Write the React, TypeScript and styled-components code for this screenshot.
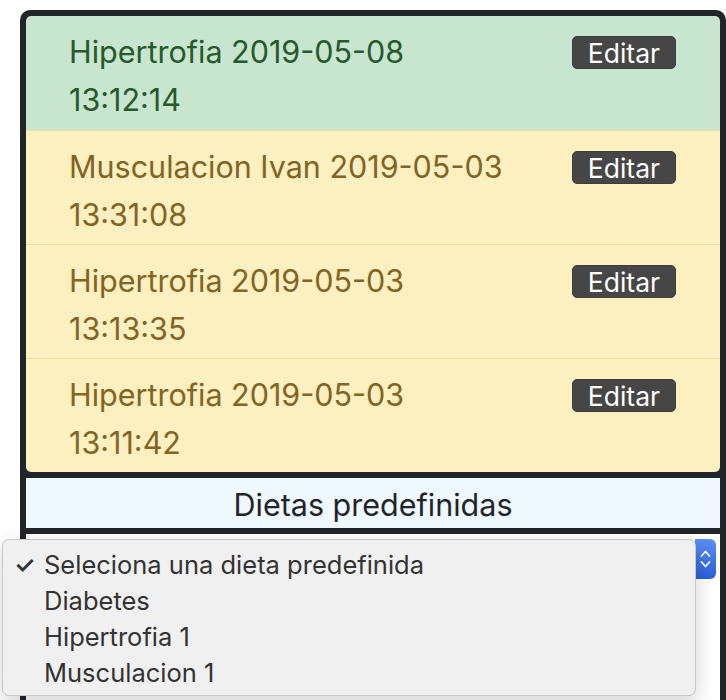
import React from "react";
import styled, { createGlobalStyle } from "styled-components";

const Global = createGlobalStyle`
  html, body { margin: 0; padding: 0; background: #ffffff; overflow: hidden; }
  body { font-family: Inter, "Noto Sans", sans-serif; }
  * { box-sizing: border-box; }
`;

const Page = styled.div`
  position: relative;
  height: 700px;
  padding: 10px 0 0 20px;
  overflow: hidden;
`;

const Frame = styled.div`
  width: 706px;
  height: 700px;
  border: 6px solid #212529;
  border-bottom: none;
  border-radius: 10px 10px 0 0;
  background: #212529;
  display: flex;
  flex-direction: column;
  gap: 6px;
`;

const ListGroup = styled.div`
  display: flex;
  flex-direction: column;
  border-radius: 5px;
  overflow: hidden;
`;

const Item = styled.div<{ $variant: "success" | "warning" }>`
  display: flex;
  align-items: flex-start;
  justify-content: space-between;
  height: 114px;
  padding: 12px 44px 0 43px;
  background: ${(p) => (p.$variant === "success" ? "#c8e5cf" : "#fcefc0")};
  color: ${(p) => (p.$variant === "success" ? "#265a2a" : "#826424")};
  border-top: 1px solid ${(p) => (p.$variant === "success" ? "#c8e5cf" : "#efdca7")};
  &:first-child { border-top: none; }
`;

const Title = styled.div`
  flex: none;
  width: 446px;
  font-size: 30.5px;
  line-height: 48px;
`;

const EditButton = styled.button`
  margin-top: 8px;
  height: 33px;
  padding: 0 15px;
  border: 1px solid #3d3d3d;
  border-radius: 5px;
  background: #464646;
  color: #ffffff;
  font-family: Inter, "Noto Sans", sans-serif;
  font-size: 26.5px;
  line-height: 30px;
`;

const Header = styled.div`
  height: 50px;
  padding-top: 3px;
  background: #f0f8ff;
  color: #212529;
  font-size: 30.5px;
  line-height: 47px;
  text-align: center;
`;

const SelectArea = styled.div`
  flex: 1;
  background: #ffffff;
  padding: 5px 4px 0 0;
`;

const SelectBox = styled.div`
  height: 40px;
  display: flex;
  justify-content: flex-end;
  background: #ffffff;
  border-radius: 6px;
`;

const Stepper = styled.div`
  width: 21px;
  height: 40px;
  border-radius: 0 6px 6px 0;
  background: linear-gradient(#5b8ff5, #2b5fd9);
  display: flex;
  align-items: center;
  justify-content: center;
`;

const Popup = styled.div`
  position: absolute;
  left: 2px;
  top: 539px;
  width: 694px;
  height: 157px;
  background: #f0f0f0;
  border: 1px solid #c8c8c8;
  border-radius: 7px;
  box-shadow: 0 6px 20px rgba(0, 0, 0, 0.18);
  padding-top: 7px;
`;

const Option = styled.div`
  position: relative;
  height: 36px;
  padding-left: 41px;
  font-size: 25.5px;
  line-height: 36px;
  color: #333333;
`;

const Check = styled.span`
  position: absolute;
  left: 11px;
  top: 0;
  font-size: 24px;
  font-weight: 600;
`;

const items: { v: "success" | "warning"; t: string }[] = [
  { v: "success", t: "Hipertrofia 2019-05-08 13:12:14" },
  { v: "warning", t: "Musculacion Ivan 2019-05-03 13:31:08" },
  { v: "warning", t: "Hipertrofia 2019-05-03 13:13:35" },
  { v: "warning", t: "Hipertrofia 2019-05-03 13:11:42" },
];

export default function App() {
  return (
    <Page>
      <Global />
      <Frame>
        <ListGroup>
          {items.map((it, i) => (
            <Item key={i} $variant={it.v}>
              <Title>{it.t}</Title>
              <EditButton>Editar</EditButton>
            </Item>
          ))}
        </ListGroup>
        <Header>Dietas predefinidas</Header>
        <SelectArea>
          <SelectBox>
            <Stepper>
              <svg width="13" height="26" viewBox="0 0 13 26" fill="none" stroke="#fff" strokeWidth="1.8" strokeLinecap="round" strokeLinejoin="round">
                <path d="M2.5 10 L6.5 5.5 L10.5 10" />
                <path d="M2.5 16 L6.5 20.5 L10.5 16" />
              </svg>
            </Stepper>
          </SelectBox>
        </SelectArea>
      </Frame>
      <Popup>
        <Option><Check>✓</Check>Seleciona una dieta predefinida</Option>
        <Option>Diabetes</Option>
        <Option>Hipertrofia 1</Option>
        <Option>Musculacion 1</Option>
      </Popup>
    </Page>
  );
}
